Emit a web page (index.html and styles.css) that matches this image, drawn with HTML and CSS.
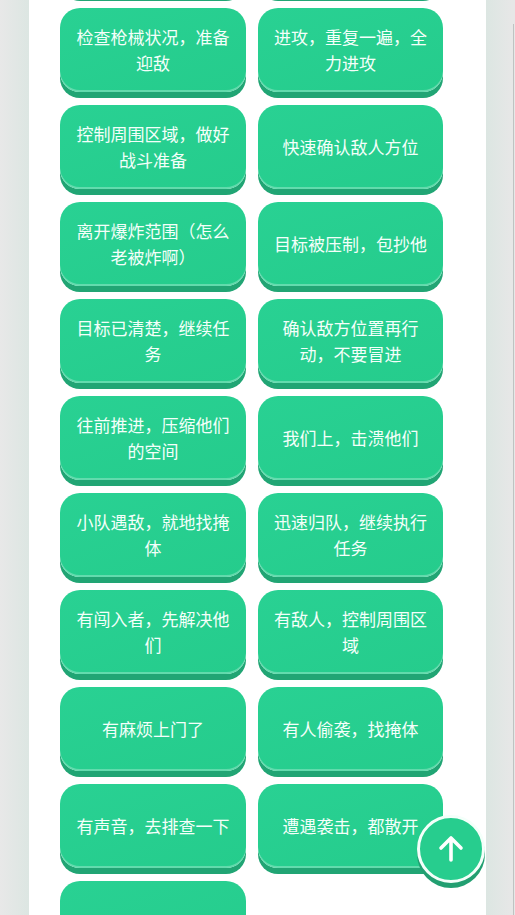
FILE: index.html
```html
<!DOCTYPE html>
<html lang="zh-CN">
<head>
<meta charset="utf-8">
<title>战术语音</title>
<link rel="stylesheet" href="styles.css">
</head>
<body>
<div class="frame">
  <div class="gutter gutter-left"></div>
  <main class="panel">
    <div class="grid">
      <button class="voice" aria-label="注意掩护，交替前进"></button>
      <button class="voice" aria-label="保持队形，准备突击"></button>
      <button class="voice">检查枪械状况，准备迎敌</button>
      <button class="voice">进攻，重复一遍，全力进攻</button>
      <button class="voice">控制周围区域，做好战斗准备</button>
      <button class="voice">快速确认敌人方位</button>
      <button class="voice">离开爆炸范围（怎么老被炸啊）</button>
      <button class="voice">目标被压制，包抄他</button>
      <button class="voice">目标已清楚，继续任务</button>
      <button class="voice">确认敌方位置再行动，不要冒进</button>
      <button class="voice">往前推进，压缩他们的空间</button>
      <button class="voice">我们上，击溃他们</button>
      <button class="voice">小队遇敌，就地找掩体</button>
      <button class="voice">迅速归队，继续执行任务</button>
      <button class="voice">有闯入者，先解决他们</button>
      <button class="voice">有敌人，控制周围区域</button>
      <button class="voice">有麻烦上门了</button>
      <button class="voice">有人偷袭，找掩体</button>
      <button class="voice">有声音，去排查一下</button>
      <button class="voice">遭遇袭击，都散开</button>
      <button class="voice" aria-label="准备撤离"></button>
    </div>
  </main>
  <div class="gutter gutter-right">
    <div class="edge"></div>
  </div>
</div>
<button class="to-top" aria-label="回到顶部">
  <svg width="30" height="30" viewBox="0 0 30 30" aria-hidden="true">
    <path d="M15 26 V5 M5 14 L15 4 L25 14" fill="none" stroke="#ffffff" stroke-width="3.6" stroke-linecap="round" stroke-linejoin="round"/>
  </svg>
</button>
</body>
</html>
```

FILE: styles.css
```css
html, body {
  margin: 0;
  padding: 0;
  height: 100%;
  overflow: hidden;
}

body {
  font-family: "Noto Sans CJK SC", "Noto Sans", sans-serif;
  background: #e4e8e6;
}

.frame {
  display: flex;
  height: 915px;
  overflow: hidden;
}

.gutter {
  flex: none;
}

.gutter-left {
  width: 29px;
  background: linear-gradient(to right, #e8e8e8, #dce6e2);
}

.gutter-right {
  width: 29px;
  display: flex;
  background: linear-gradient(to right, #dce6e2, #e7e7e7 90%);
}

.edge {
  margin-left: 27px;
  width: 1px;
  margin-top: 24px;
  background: #bfc3c2;
}

.panel {
  flex: none;
  width: 457px;
  background: #ffffff;
  overflow: hidden;
}

.grid {
  display: grid;
  grid-template-columns: 186px 185px;
  grid-auto-rows: 84px;
  column-gap: 12px;
  row-gap: 13px;
  padding-left: 31px;
  margin-top: -89px;
}

.voice {
  border: none;
  margin: 0;
  padding: 0 14px;
  border-radius: 20px;
  background: linear-gradient(160deg, #29d193, #25cc8c);
  color: #f4fffa;
  font-family: "Noto Sans CJK SC", "Noto Sans", sans-serif;
  font-size: 17px;
  line-height: 26px;
  text-align: center;
  box-shadow: inset 0 -2px 0 rgba(255, 255, 255, 0.28), 0 6px 0 #21a574;
  cursor: pointer;
}

.to-top {
  position: fixed;
  right: 30px;
  bottom: 32px;
  width: 68px;
  height: 68px;
  border-radius: 50%;
  border: 3px solid #f4fffa;
  background: #27cd8e;
  box-shadow: 0 5px 0 #229f71;
  display: flex;
  align-items: center;
  justify-content: center;
  padding: 0;
  cursor: pointer;
}
```
